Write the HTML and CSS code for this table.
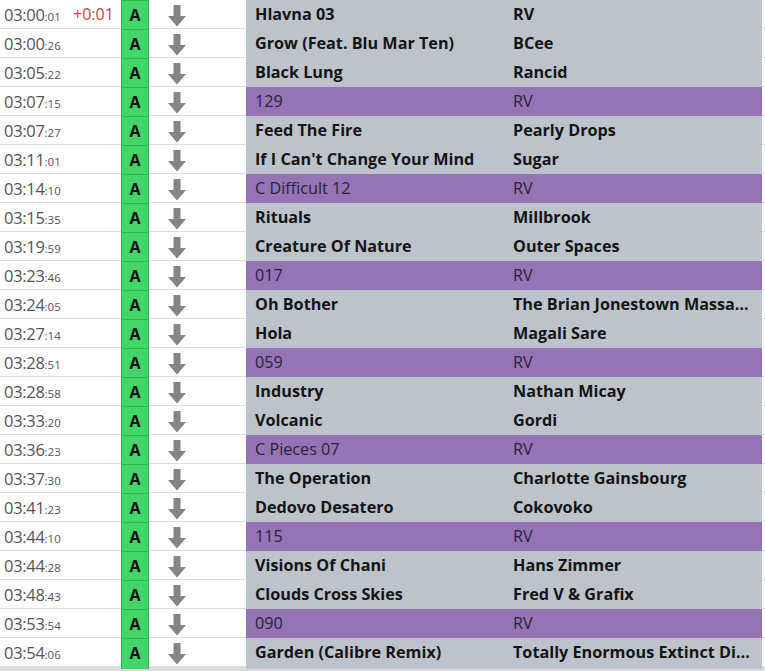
FILE: index.html
```html
<!DOCTYPE html>
<html>
<head>
<meta charset="utf-8">
<link rel="stylesheet" href="styles.css">
</head>
<body>
<div class="list" id="list"></div>
<div class="foot"></div>
<script>
const rows = [
["03:00","01","+0:01","Hlavna 03","RV",0],
["03:00","26","","Grow (Feat. Blu Mar Ten)","BCee",0],
["03:05","22","","Black Lung","Rancid",0],
["03:07","15","","129","RV",1],
["03:07","27","","Feed The Fire","Pearly Drops",0],
["03:11","01","","If I Can't Change Your Mind","Sugar",0],
["03:14","10","","C Difficult 12","RV",1],
["03:15","35","","Rituals","Millbrook",0],
["03:19","59","","Creature Of Nature","Outer Spaces",0],
["03:23","46","","017","RV",1],
["03:24","05","","Oh Bother","The Brian Jonestown Massacre",0],
["03:27","14","","Hola","Magali Sare",0],
["03:28","51","","059","RV",1],
["03:28","58","","Industry","Nathan Micay",0],
["03:33","20","","Volcanic","Gordi",0],
["03:36","23","","C Pieces 07","RV",1],
["03:37","30","","The Operation","Charlotte Gainsbourg",0],
["03:41","23","","Dedovo Desatero","Cokovoko",0],
["03:44","10","","115","RV",1],
["03:44","28","","Visions Of Chani","Hans Zimmer",0],
["03:48","43","","Clouds Cross Skies","Fred V &amp; Grafix",0],
["03:53","54","","090","RV",1],
["03:54","06","","Garden (Calibre Remix)","Totally Enormous Extinct Dinosaurs",0]
];
const arrow = '<svg width="20" height="22" viewBox="0 0 20 22"><path d="M6.5 0H13.5V11H19L10 21.5L1 11H6.5Z" fill="#858585"/></svg>';
document.getElementById('list').innerHTML = rows.map(r =>
 `<div class="row${r[5] ? ' id' : ''}">
  <div class="time">${r[0]}<small>:${r[1]}</small></div>
  <div class="delta">${r[2]}</div>
  <div class="badge">A</div>
  <div class="arrow">${arrow}</div>
  <div class="title">${r[3]}</div>
  <div class="artist">${r[4]}</div>
 </div>`).join('');
</script>
</body>
</html>
```
FILE: styles.css
```css
html, body { margin: 0; padding: 0; background: #fff; }
body { font-family: "Open Sans", "Noto Sans", sans-serif; width: 765px; height: 671px; overflow: hidden; }
.list { display: flex; flex-direction: column; }
.row {
  display: grid;
  grid-template-columns: 70px 51px 28px 97px 258px 258px;
  height: 29px;
  box-sizing: border-box;
  border-bottom: 1px solid #dedede;
}
.time {
  padding-left: 4px;
  font-size: 16.5px;
  color: #555;
  line-height: 29px;
  letter-spacing: -0.3px;
  white-space: nowrap;
}
.time small { font-size: 11.5px; letter-spacing: 0; }
.delta { color: #c4474b; font-size: 16px; line-height: 29px; padding-left: 3px; }
.badge {
  background: #43d46a;
  border: 1px solid #32b455;
  border-bottom: 0;
  box-sizing: border-box;
  text-align: center;
  font-weight: 700;
  font-size: 16px;
  line-height: 28px;
  color: #111;
}
.arrow { display: flex; align-items: center; padding-left: 18px; }
.arrow svg { display: block; }
.title, .artist {
  background: #bcc3cb;
  padding-left: 9px;
  font-size: 16.2px;
  font-weight: 700;
  color: #151515;
  line-height: 29px;
  white-space: nowrap;
  overflow: hidden;
  text-overflow: ellipsis;
  padding-right: 6px;
}
.row.id .title, .row.id .artist {
  background: #9474b4;
  font-weight: 400;
  color: #2a2338;
}
.foot { height: 4px; background: #dcdcdc; }
```
